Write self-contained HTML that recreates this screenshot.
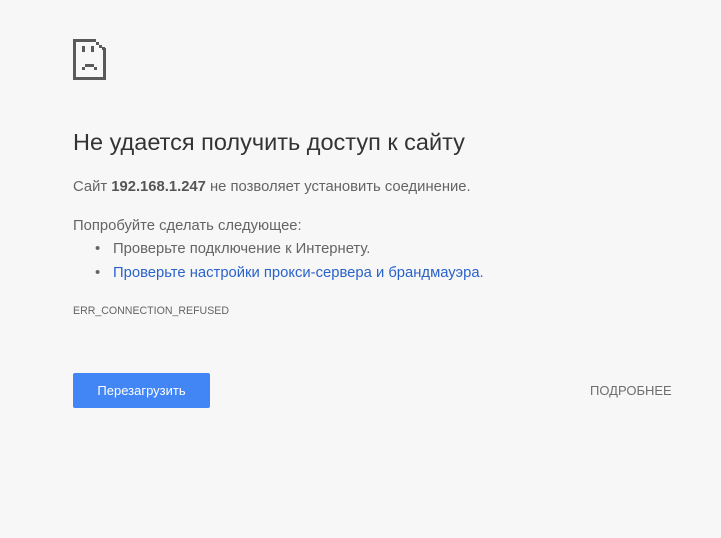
<!DOCTYPE html>
<html><head><meta charset="utf-8"><style>
body{margin:0;background:#f7f7f7;width:721px;height:538px;font-family:"Liberation Sans","DejaVu Sans",sans-serif;color:#646464;position:relative;overflow:hidden}
.a{position:absolute;white-space:nowrap}
h1{position:absolute;left:73px;top:129px;margin:0;font-size:23.5px;font-weight:normal;color:#333}
.t{font-size:14.8px}
.btn{position:absolute;left:73px;top:373px;width:137px;height:35px;background:#4285f4;border-radius:2px;color:#fff;font-size:13px;text-align:center;line-height:35px}
</style></head><body>
<svg class="a" style="left:0;top:0" width="120" height="90" shape-rendering="crispEdges">
<g fill="#5a5a5a">
<rect x="73" y="39" width="3" height="41"/>
<rect x="73" y="39" width="21" height="3"/>
<rect x="73" y="77" width="33" height="3"/>
<rect x="103" y="48" width="3" height="32"/>
<rect x="93" y="39" width="3" height="3"/>
<rect x="96" y="42" width="3" height="3"/>
<rect x="99" y="45" width="3" height="3"/>
<rect x="102" y="47" width="3" height="3"/>
<rect x="82" y="46" width="3" height="6"/>
<rect x="91" y="46" width="3" height="6"/>
<rect x="85" y="64" width="9" height="3"/>
<rect x="82" y="67" width="3" height="3"/>
<rect x="94" y="67" width="3" height="3"/>
</g></svg>
<h1>Не удается получить доступ к сайту</h1>
<div class="a t" style="left:73px;top:179px">Сайт <b style="color:#555">192.168.1.247</b> не позволяет установить соединение.</div>
<div class="a t" style="left:73px;top:218px">Попробуйте сделать следующее:</div>
<div class="a t" style="left:95px;top:241px">•</div>
<div class="a t" style="left:113px;top:241px">Проверьте подключение к Интернету.</div>
<div class="a t" style="left:95px;top:265px">•</div>
<div class="a t" style="left:113px;top:265px;color:#2a62c9">Проверьте настройки прокси-сервера и брандмауэра.</div>
<div class="a" style="left:73px;top:305px;font-size:10.6px">ERR_CONNECTION_REFUSED</div>
<div class="btn">Перезагрузить</div>
<div class="a" style="left:590px;top:383px;font-size:13px;color:#6e6e6e">ПОДРОБНЕЕ</div>
</body></html>
